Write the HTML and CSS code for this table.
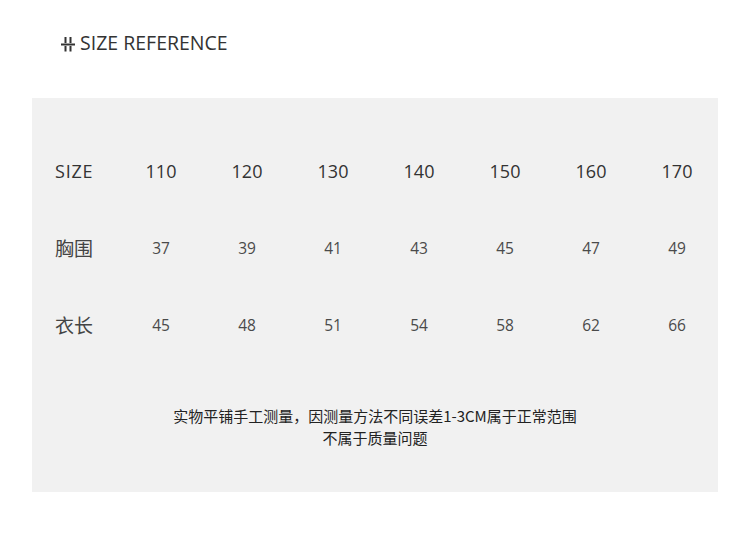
FILE: index.html
```html
<!DOCTYPE html>
<html lang="zh-CN">
<head>
<meta charset="utf-8">
<link rel="stylesheet" href="styles.css">
</head>
<body>
<div class="page">
  <h1 class="title">
    <svg class="icon" width="14" height="16" viewBox="0 0 14 16">
      <path d="M0 8.5H14M4.5 1V7M9.5 1V7M4.5 10V15.5M9.5 10V15.5" stroke="#333" stroke-width="2" fill="none"/>
    </svg>
    <span>SIZE REFERENCE</span>
  </h1>
  <div class="panel">
    <div class="table">
      <div class="cell label head">SIZE</div>
      <div class="cell head">110</div>
      <div class="cell head">120</div>
      <div class="cell head">130</div>
      <div class="cell head">140</div>
      <div class="cell head">150</div>
      <div class="cell head">160</div>
      <div class="cell head">170</div>

      <div class="cell label cn">胸围</div>
      <div class="cell">37</div>
      <div class="cell">39</div>
      <div class="cell">41</div>
      <div class="cell">43</div>
      <div class="cell">45</div>
      <div class="cell">47</div>
      <div class="cell">49</div>

      <div class="cell label cn">衣长</div>
      <div class="cell">45</div>
      <div class="cell">48</div>
      <div class="cell">51</div>
      <div class="cell">54</div>
      <div class="cell">58</div>
      <div class="cell">62</div>
      <div class="cell">66</div>
    </div>
    <p class="note">实物平铺手工测量，因测量方法不同误差1-3CM属于正常范围<br>不属于质量问题</p>
  </div>
</div>
</body>
</html>
```

FILE: styles.css
```css
html, body {
  margin: 0;
  padding: 0;
  background: #ffffff;
}
body {
  font-family: "Open Sans", "Noto Sans CJK SC", sans-serif;
  color: #333;
  width: 750px;
  height: 535px;
  overflow: hidden;
}
.page {
  padding-top: 31px;
}
.title {
  margin: 0 0 0 61px;
  height: 24px;
  display: flex;
  align-items: center;
  gap: 5px;
  font-size: 19.5px;
  font-weight: 400;
  line-height: 24px;
  color: #333;
}
.icon {
  display: block;
  margin-top: 1px;
}
.panel {
  margin: 43px 0 0 32px;
  width: 686px;
  height: 394px;
  box-sizing: border-box;
  background: #f1f1f1;
  padding-top: 34px;
}
.table {
  display: grid;
  grid-template-columns: repeat(8, 86px);
  grid-auto-rows: 77px;
}
.cell {
  display: flex;
  align-items: center;
  justify-content: center;
  font-size: 15.5px;
  color: #4a4a4a;
}
.cell.head {
  font-size: 18px;
  color: #333;
}
.cell.label {
  justify-content: flex-start;
  padding-left: 23px;
  font-size: 18px;
  color: #333;
}
.cell.label.head {
  letter-spacing: 0.8px;
}
.cell.cn {
  font-family: "Noto Sans CJK SC", sans-serif;
  font-size: 19px;
  color: #444;
}
.note {
  margin: 42px 0 0 0;
  text-align: center;
  font-family: "Noto Sans CJK SC", sans-serif;
  font-size: 15px;
  line-height: 22px;
  color: #222;
}
```
